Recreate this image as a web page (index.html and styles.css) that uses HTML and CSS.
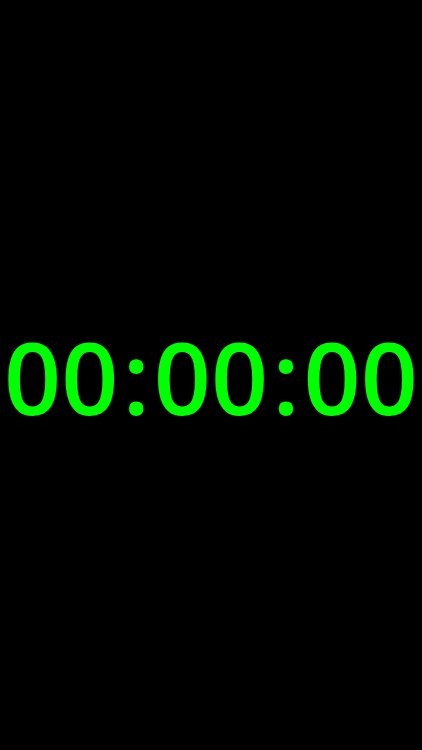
FILE: index.html
```html
<!DOCTYPE html>
<html>
<head>
<meta charset="utf-8">
<link rel="stylesheet" href="styles.css">
</head>
<body>
<main class="screen">
  <div class="clock">00<span class="sep">:</span>00<span class="sep">:</span>00</div>
</main>
</body>
</html>
```
FILE: styles.css
```css
html, body {
  margin: 0;
  padding: 0;
  background: #000;
}
.screen {
  width: 422px;
  height: 750px;
  display: flex;
  align-items: center;
  justify-content: center;
  background: #000;
}
.clock {
  font-family: "Open Sans", "Liberation Sans", sans-serif;
  font-weight: 600;
  font-size: 100px;
  line-height: 1;
  color: #00ff00;
  white-space: nowrap;
  margin-top: 2px;
}
.sep {
  padding: 0 4px;
}
```
